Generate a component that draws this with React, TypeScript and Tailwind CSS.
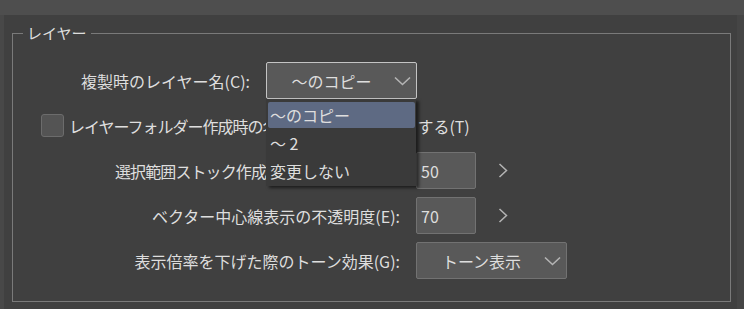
const font = "font-['Noto_Sans_CJK_JP','Noto_Sans',sans-serif]"

function DownMark() {
  return (
    <svg width="17" height="10" viewBox="0 0 17 10" className="mr-[5px] shrink-0">
      <polyline points="1,1.5 8.5,8.5 16,1.5" fill="none" stroke="#b4b4b4" strokeWidth="1.6" />
    </svg>
  )
}

function RightMark() {
  return (
    <svg width="10" height="15" viewBox="0 0 10 15">
      <polyline points="1.5,1 8.5,7.5 1.5,14" fill="none" stroke="#b4b4b4" strokeWidth="1.5" />
    </svg>
  )
}

function Select({ value, open }: { value: string; open?: boolean }) {
  return (
    <div
      className={`flex h-[37px] w-[151px] items-center rounded-[2px] border bg-[#595959] ${
        open ? "border-[#c4c4c4]" : "border-[#727272]"
      }`}
    >
      <span className="flex-1 pl-[2px] text-center text-[16px] leading-none">{value}</span>
      <DownMark />
    </div>
  )
}

function NumberField({ value }: { value: string }) {
  return (
    <div className="flex items-center gap-[22px]">
      <div className="flex h-[37px] w-[60px] items-center rounded-[2px] border border-[#727272] bg-[#595959] pl-[4px] text-[16px]">
        {value}
      </div>
      <RightMark />
    </div>
  )
}

export default function App() {
  return (
    <div className={`flex h-[309px] w-[744px] flex-col bg-[#4e4e4e] text-[#dedede] ${font}`}>
      <div className="h-[15px] shrink-0" />
      <div className="flex flex-1">
        <div className="w-[4px] bg-[#484848]" />
        <div className="relative flex-1 bg-[#404040] pl-[8px] pt-[8px]">
          <fieldset className="h-[279px] w-[719px] border border-[#7a7a7a]">
            <legend className="ml-[10px] px-[4px] text-[15px] leading-[20px]">レイヤー</legend>

            <div className="mt-[15px] flex flex-col">
              {/* duplicate name */}
              <div className="flex h-[45px] items-center">
                <span className="w-[237px] text-right text-[16px]">複製時のレイヤー名(C):</span>
                <div className="ml-[16px]">
                  <Select value="〜のコピー" open />
                </div>
              </div>

              {/* folder name checkbox */}
              <div className="flex h-[45px] items-center">
                <div className="ml-[28px] h-[23px] w-[23px] rounded-[3px] border border-[#6c6c6c] bg-[#545454]" />
                <span className="ml-[5px] whitespace-nowrap text-[16px]">
                  <span className="tracking-[-1px]">レイヤーフォルダー作成時の</span>
                  <span className="tracking-[1.2px]">名前を自動的に入力</span>
                  <span>する(T)</span>
                </span>
              </div>

              {/* label partly under the open list */}
              <div className="flex h-[45px] items-center">
                <span className="ml-[102px] w-[285px] whitespace-nowrap text-[16px] tracking-[-0.9px]">
                  選択範囲ストック作成時の不透明度(S):
                </span>
                <div className="ml-[16px]">
                  <NumberField value="50" />
                </div>
              </div>

              <div className="flex h-[45px] items-center">
                <span className="w-[387px] text-right text-[16px]">ベクター中心線表示の不透明度(E):</span>
                <div className="ml-[16px]">
                  <NumberField value="70" />
                </div>
              </div>

              <div className="flex h-[45px] items-center">
                <span className="w-[387px] text-right text-[16px]">表示倍率を下げた際のトーン効果(G):</span>
                <div className="ml-[16px]">
                  <Select value="トーン表示" />
                </div>
              </div>
            </div>
          </fieldset>

          {/* open dropdown list */}
          <div className="absolute left-[262px] top-[84px] w-[150px] bg-[#3a3a3a] pb-[2px] pl-[2px] pr-[1px] pt-[3px] text-[16px] shadow-[3px_2px_3px_rgba(0,0,0,0.55)]">
            <div className="mb-[2px] flex h-[26px] items-center rounded-[2px] bg-[#5e6a83] px-[2px]">〜のコピー</div>
            <div className="mb-[2px] flex h-[26px] items-center px-[2px]">〜 2</div>
            <div className="flex h-[26px] items-center px-[2px]">変更しない</div>
          </div>
        </div>
        <div className="w-[7px] bg-[#454545]" />
      </div>
    </div>
  )
}
